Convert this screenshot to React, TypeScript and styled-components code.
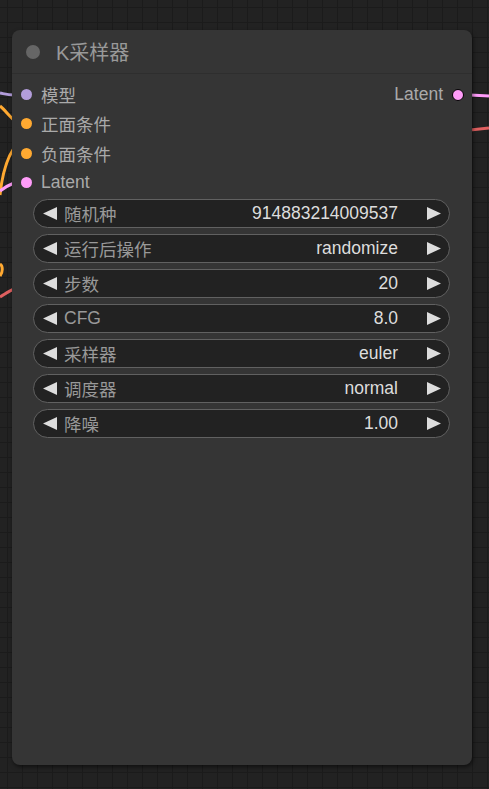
import React from "react";
import styled, { createGlobalStyle } from "styled-components";

const Global = createGlobalStyle`
  html, body { margin: 0; padding: 0; }
  body {
    width: 489px;
    height: 789px;
    overflow: hidden;
    background-color: #222222;
    background-image:
      linear-gradient(to right, #1b1b1b 1px, transparent 1px),
      linear-gradient(to bottom, #1b1b1b 1px, transparent 1px);
    background-size: 15px 15px;
    background-position: 7px 7px;
    font-family: Arial, "Liberation Sans", "Noto Sans CJK SC", sans-serif;
  }
`;

const Canvas = styled.div`
  position: relative;
  width: 489px;
  height: 789px;
`;

const Wires = styled.svg`
  position: absolute;
  left: 0;
  top: 0;
`;

const Node = styled.div`
  position: absolute;
  left: 12px;
  top: 30px;
  width: 460px;
  height: 735px;
  background: #353535;
  border-radius: 8px;
  box-shadow: 1px 2px 4px rgba(0, 0, 0, 0.55);
  display: flex;
  flex-direction: column;
`;

const Title = styled.div`
  height: 43px;
  display: flex;
  align-items: center;
  gap: 16px;
  padding-left: 14px;
  border-bottom: 1px solid #2e2e2e;
  color: #999;
  font-size: 20px;
`;

const TitleDot = styled.span`
  width: 14px;
  height: 14px;
  border-radius: 50%;
  background: #666;
`;

const Body = styled.div`
  display: flex;
  flex-direction: column;
  padding-top: 6px;
`;

const SlotRow = styled.div`
  height: 29.3px;
  display: flex;
  align-items: center;
  justify-content: space-between;
  padding: 0 8px 0 9px;
`;

const Slot = styled.div<{ $out?: boolean }>`
  display: flex;
  align-items: center;
  gap: 9px;
  color: #aaa;
  font-size: 17.5px;
  flex-direction: ${(p) => (p.$out ? "row-reverse" : "row")};
`;

const Dot = styled.span<{ $c: string; $ring?: boolean }>`
  width: ${(p) => (p.$ring ? 12 : 11)}px;
  height: ${(p) => (p.$ring ? 12 : 11)}px;
  border-radius: 50%;
  background: ${(p) => p.$c};
  box-sizing: border-box;
  border: ${(p) => (p.$ring ? "1.5px solid #000" : "none")};
`;

const Widgets = styled.div`
  display: flex;
  flex-direction: column;
  gap: 6px;
  padding: 2px 22px 0 21px;
`;

const Widget = styled.div`
  height: 27px;
  border: 1px solid #616161;
  border-radius: 15px;
  background: #222;
  display: flex;
  align-items: center;
  padding: 0 8px 0 9px;
  font-size: 17.5px;
`;

const ArrowSvg = styled.svg`
  flex: none;
  display: block;
`;

const Label = styled.span`
  color: #999;
  margin-left: 7px;
  flex: 1;
  white-space: nowrap;
`;

const Value = styled.span`
  color: #ddd;
  margin-right: 29px;
  white-space: nowrap;
`;

function Arrow({ right }: { right?: boolean }) {
  return (
    <ArrowSvg width="14" height="13" viewBox="0 0 14 13">
      <polygon
        points={right ? "0,0 14,6.5 0,13" : "14,0 0,6.5 14,13"}
        fill="#ddd"
      />
    </ArrowSvg>
  );
}

const inputs = [
  { name: "模型", c: "#b39ddb" },
  { name: "正面条件", c: "#ffa931" },
  { name: "负面条件", c: "#ffa931" },
  { name: "Latent", c: "#ff9cf9" },
];

const widgets = [
  ["随机种", "914883214009537"],
  ["运行后操作", "randomize"],
  ["步数", "20"],
  ["CFG", "8.0"],
  ["采样器", "euler"],
  ["调度器", "normal"],
  ["降噪", "1.00"],
];

export default function App() {
  return (
    <>
      <Global />
      <Canvas>
        <Wires width="489" height="789">
          <path d="M0 93 C5 94 8 95 14 95" stroke="#b39ddb" strokeWidth="3" fill="none" />
          <path d="M0 106 C5 110 9 116 14 120" stroke="#ffa931" strokeWidth="3" fill="none" />
          <path d="M0 195 C2 176 6 160 14 148" stroke="#ffa931" strokeWidth="3" fill="none" />
          <path d="M0 191 C5 187 9 185 14 183" stroke="#ff9cf9" strokeWidth="3" fill="none" />
          <path d="M0 264 C3 266 3 272 0 276" stroke="#ffa931" strokeWidth="3" fill="none" />
          <path d="M0 297 C5 294 9 291 14 289" stroke="#e06060" strokeWidth="3" fill="none" />
          <path d="M470 95 L489 96" stroke="#ff9cf9" strokeWidth="3" fill="none" />
          <path d="M470 130 L489 128" stroke="#e06060" strokeWidth="3" fill="none" />
        </Wires>
        <Node>
          <Title>
            <TitleDot />
            <span>K采样器</span>
          </Title>
          <Body>
            {inputs.map((s, i) => (
              <SlotRow key={s.name}>
                <Slot>
                  <Dot $c={s.c} />
                  <span>{s.name}</span>
                </Slot>
                {i === 0 && (
                  <Slot $out>
                    <Dot $c="#ff9cf9" $ring />
                    <span>Latent</span>
                  </Slot>
                )}
              </SlotRow>
            ))}
            <Widgets>
              {widgets.map(([l, v]) => (
                <Widget key={l}>
                  <Arrow />
                  <Label>{l}</Label>
                  <Value>{v}</Value>
                  <Arrow right />
                </Widget>
              ))}
            </Widgets>
          </Body>
        </Node>
      </Canvas>
    </>
  );
}
